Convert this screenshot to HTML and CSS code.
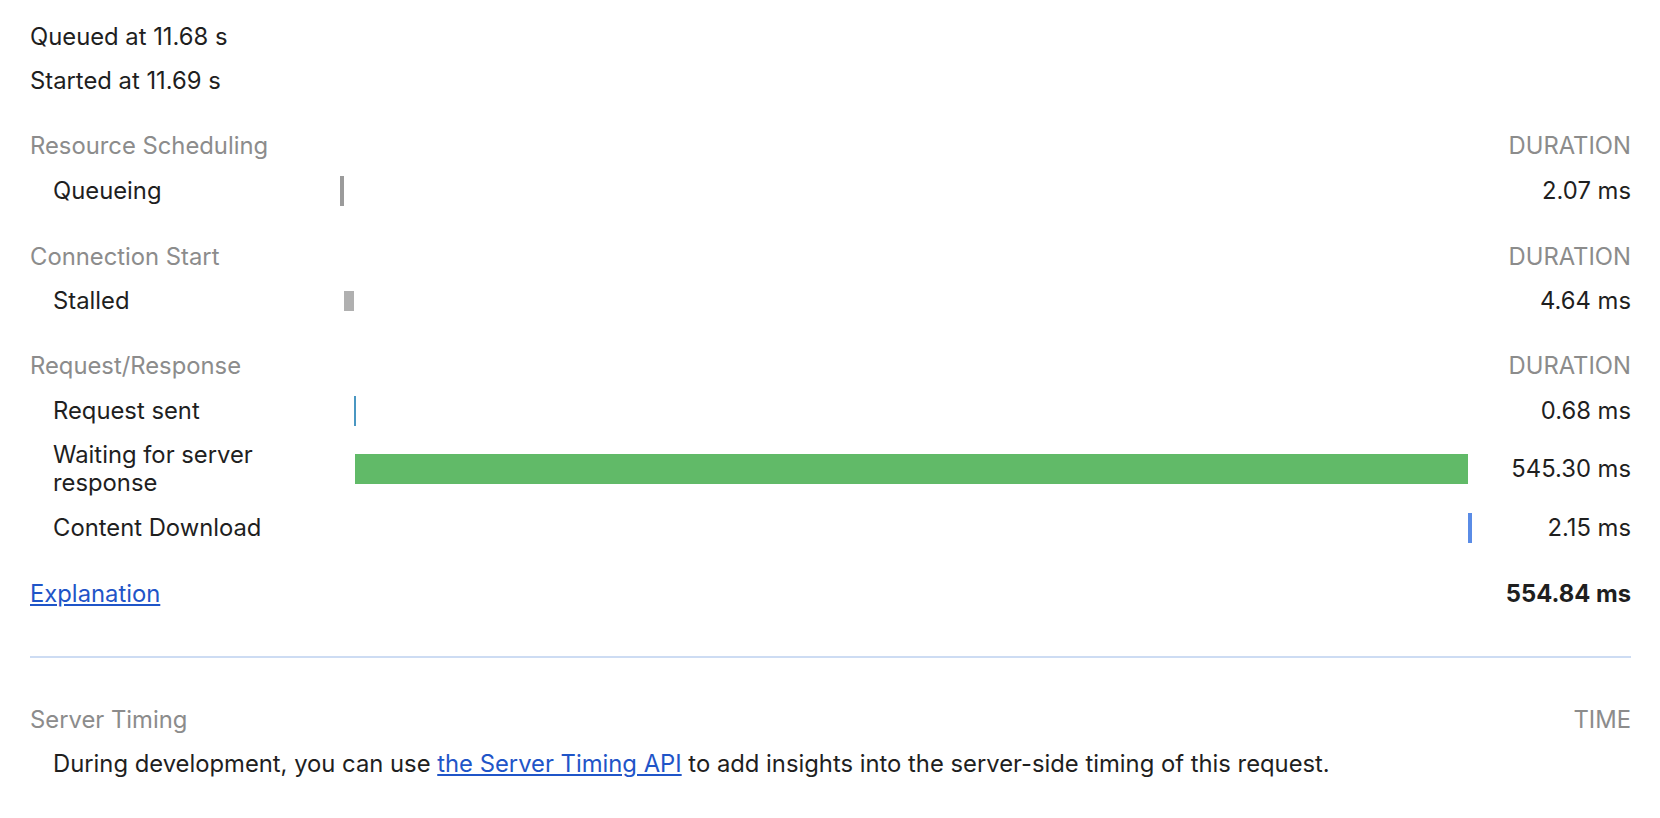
FILE: index.html
```html
<!DOCTYPE html>
<html lang="en">
<head>
    <meta charset="UTF-8">
    <title>Timing</title>
    <link rel="stylesheet" href="styles.css">
</head>
<body>
    <div class="times">
        <p>Queued at 11.68 s</p>
        <p>Started at 11.69 s</p>
    </div>

    <div class="timing-table">
        <div class="section">
            <div class="row header">
                <div class="label">Resource Scheduling</div>
                <div class="track"></div>
                <div class="value">DURATION</div>
            </div>
            <div class="row">
                <div class="label sub">Queueing</div>
                <div class="track"><div class="bar queueing" style="margin-left: 0%; width: 0.373%"></div></div>
                <div class="value">2.07 ms</div>
            </div>
        </div>

        <div class="section">
            <div class="row header">
                <div class="label">Connection Start</div>
                <div class="track"></div>
                <div class="value">DURATION</div>
            </div>
            <div class="row">
                <div class="label sub">Stalled</div>
                <div class="track"><div class="bar stalled" style="margin-left: 0.373%; width: 0.836%"></div></div>
                <div class="value">4.64 ms</div>
            </div>
        </div>

        <div class="section">
            <div class="row header">
                <div class="label">Request/Response</div>
                <div class="track"></div>
                <div class="value">DURATION</div>
            </div>
            <div class="row">
                <div class="label sub">Request sent</div>
                <div class="track"><div class="bar sending" style="margin-left: 1.209%; width: 0.123%"></div></div>
                <div class="value">0.68 ms</div>
            </div>
            <div class="row">
                <div class="label sub">Waiting for server response</div>
                <div class="track"><div class="bar waiting" style="margin-left: 1.332%; width: 98.28%"></div></div>
                <div class="value">545.30 ms</div>
            </div>
            <div class="row">
                <div class="label sub">Content Download</div>
                <div class="track"><div class="bar download" style="margin-left: 99.612%; width: 0.388%"></div></div>
                <div class="value">2.15 ms</div>
            </div>
        </div>

        <div class="section">
            <div class="row total">
                <div class="label"><a href="#">Explanation</a></div>
                <div class="track"></div>
                <div class="value">554.84 ms</div>
            </div>
        </div>
    </div>

    <hr class="divider">

    <div class="server-timing">
        <div class="row header">
            <div class="label">Server Timing</div>
            <div class="track"></div>
            <div class="value">TIME</div>
        </div>
        <p class="note">During development, you can use <a href="#">the Server Timing API</a> to add insights into the server-side timing of this request.</p>
    </div>
</body>
</html>
```

FILE: styles.css
```css
:root {
    --text-color: #1f1f1f;
    --muted-color: #8c8c8c;
    --link-color: #1f55c8;
    --divider-color: #cddcf3;
}

* {
    box-sizing: border-box;
}

body {
    margin: 0;
    padding: 23px 29px 0 30px;
    font-family: Inter, "Noto Sans", sans-serif;
    font-size: 23.8px;
    line-height: 28px;
    color: var(--text-color);
    background: #fff;
}

a {
    color: var(--link-color);
}

.times p {
    margin: 0;
}

.times p + p {
    margin-top: 15.5px;
}

.timing-table {
    padding-top: 8px;
}

.section {
    margin-top: 22px;
}

.row {
    display: grid;
    grid-template-columns: 310px 1132px 1fr;
    align-items: center;
    padding: 7.75px 0;
}

.row.header {
    color: var(--muted-color);
}

.label.sub {
    padding-left: 23px;
    padding-right: 20px;
}

.value {
    text-align: right;
}

.track {
    display: flex;
    align-items: center;
}

.bar {
    height: 30px;
    min-width: 2px;
    flex: none;
}

.bar.queueing {
    background: #9b9b9b;
}

.bar.stalled {
    height: 20px;
    background: #b0b0b0;
}

.bar.sending {
    background: #4a97c2;
}

.bar.waiting {
    background: #61ba68;
}

.bar.download {
    background: #5a8ce6;
}

.total .value {
    font-weight: 700;
}

.divider {
    border: none;
    border-top: 2px solid var(--divider-color);
    margin: 40px 0 0;
}

.server-timing {
    margin-top: 40.5px;
}

.note {
    margin: 0;
    padding: 7.75px 0 0 23px;
}
```
